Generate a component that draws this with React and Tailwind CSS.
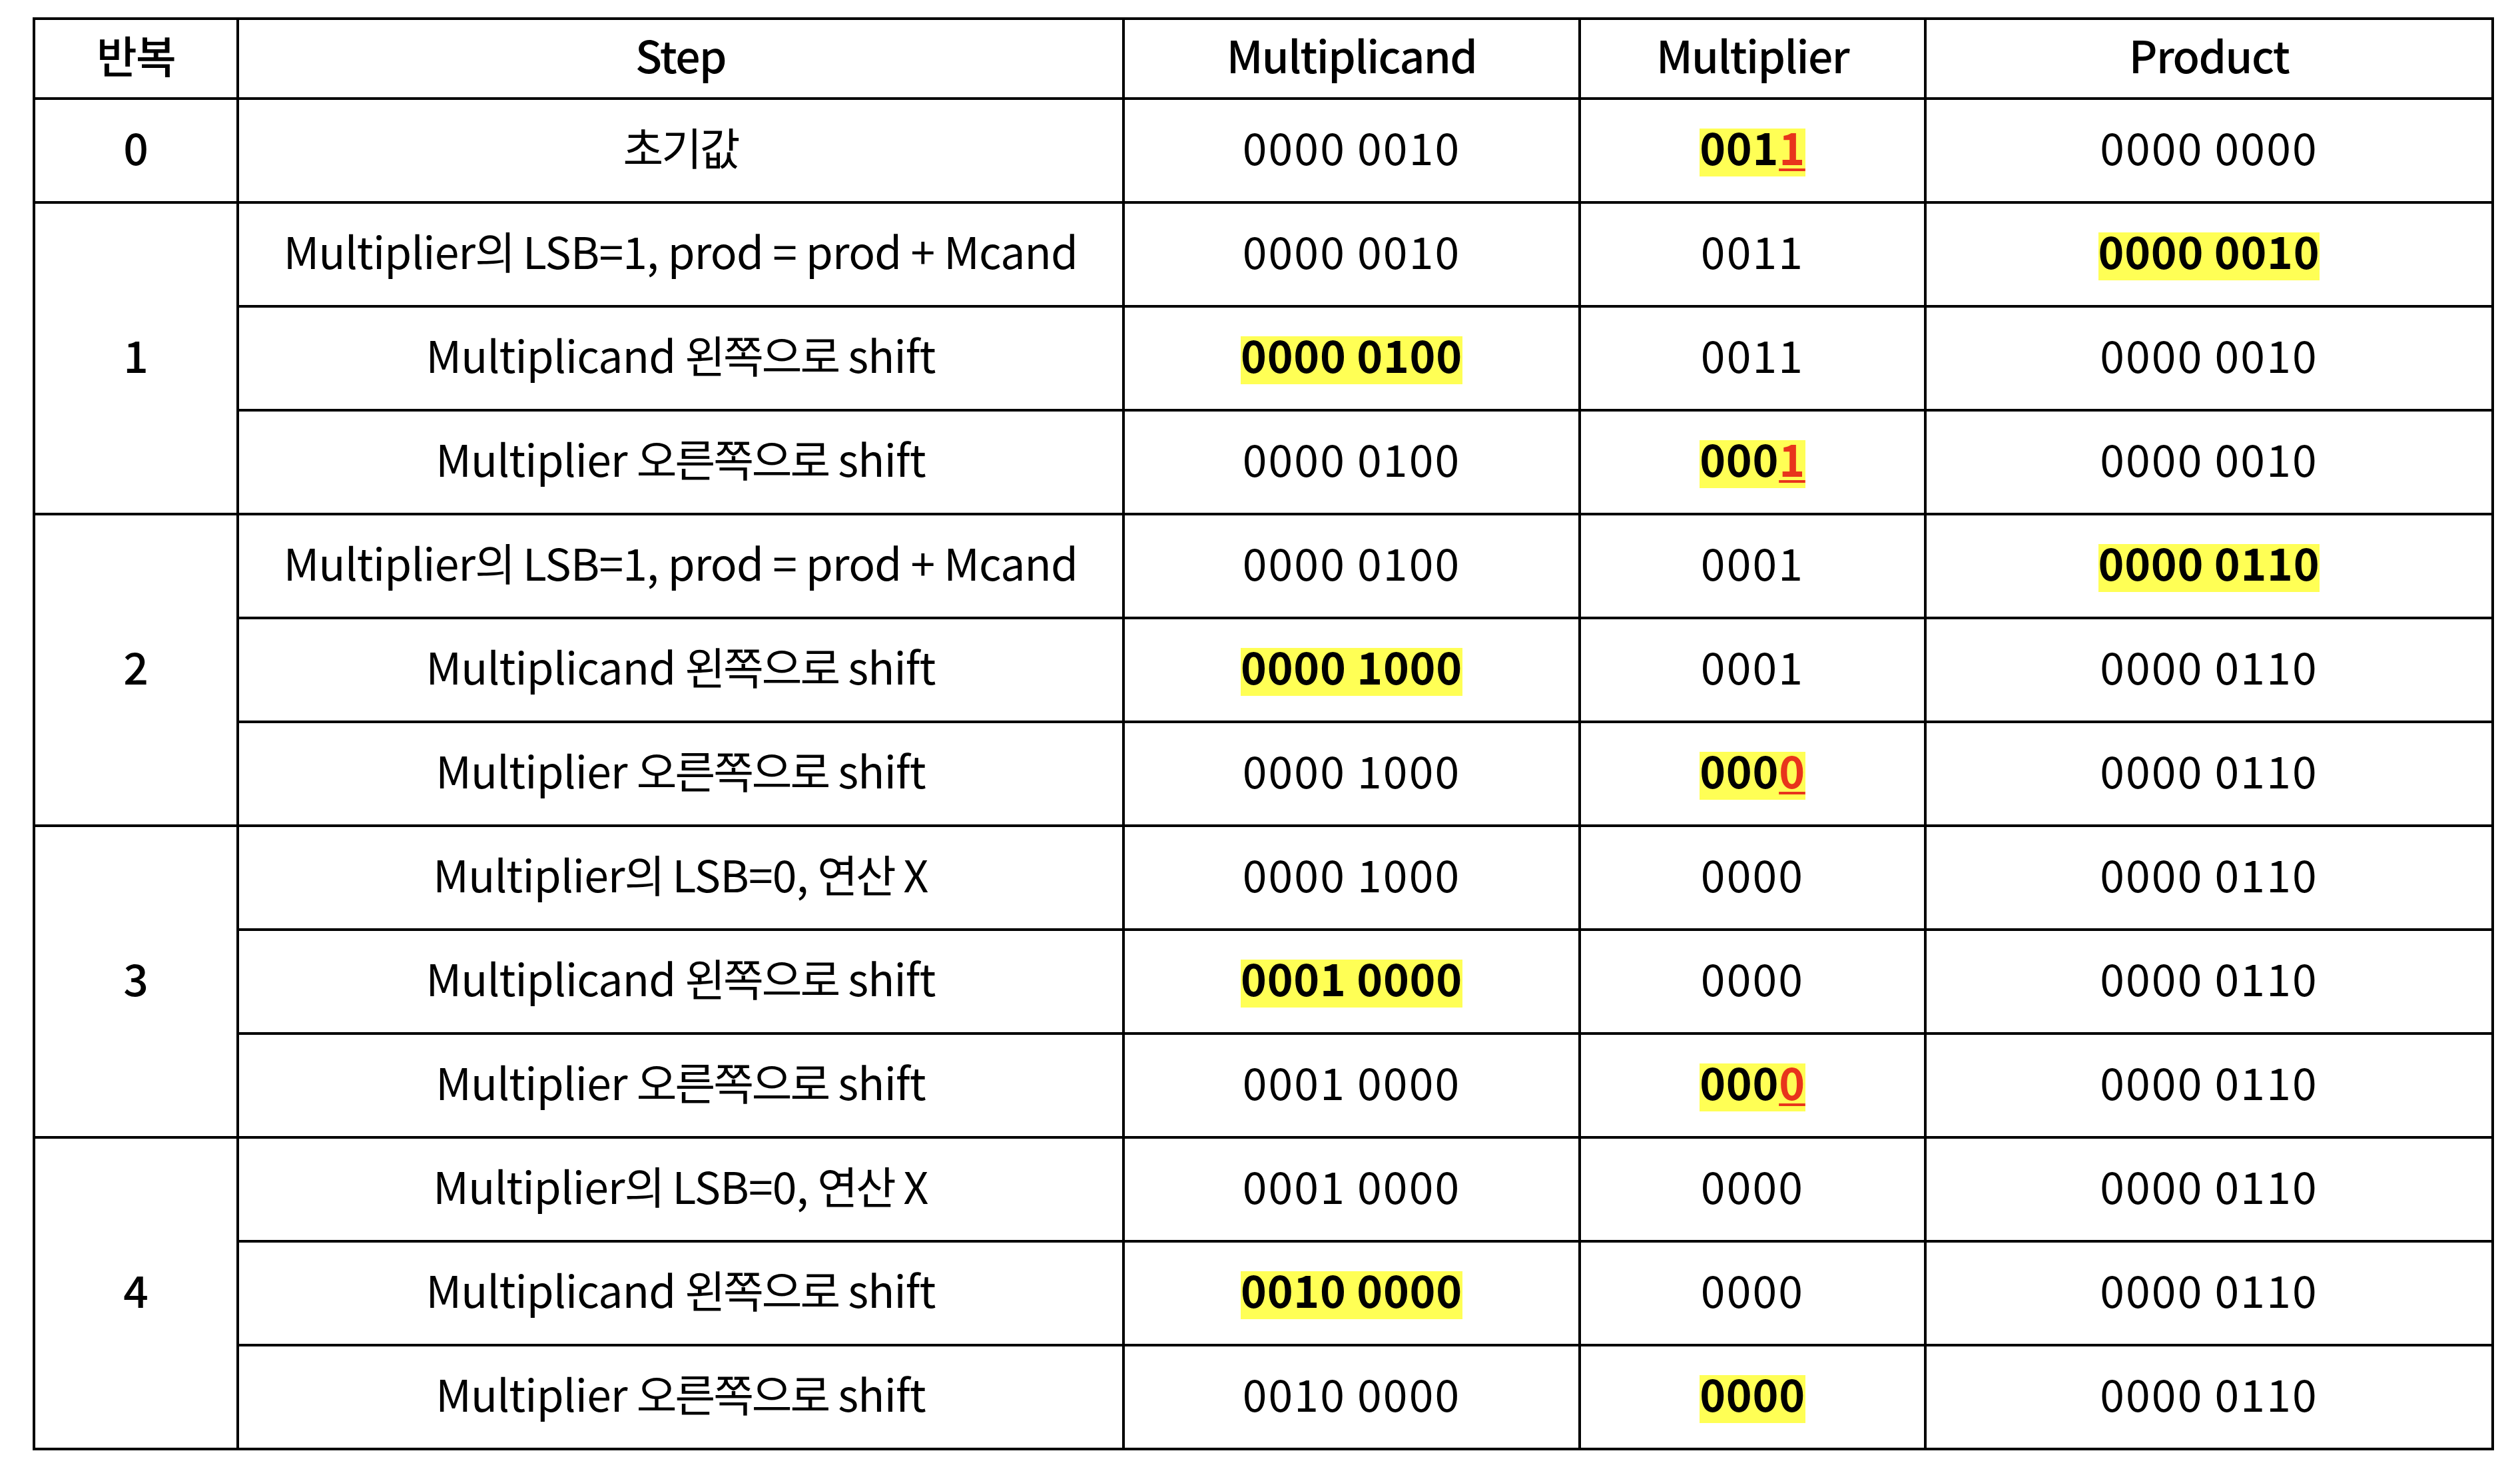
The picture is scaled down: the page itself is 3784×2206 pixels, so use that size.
import React from "react";

const F = "font-['Noto_Sans_CJK_KR','Noto_Sans',sans-serif]";

function Ko({ text }) {
  const parts = text.split(/([\uAC00-\uD7A3]+)/);
  return parts.map((p, i) =>
    /[\uAC00-\uD7A3]/.test(p) ? (
      <span key={i} className="tracking-[-3px]">
        {p}
      </span>
    ) : (
      <React.Fragment key={i}>{p}</React.Fragment>
    )
  );
}

function Box({ children, hl, bold, track = "" }) {
  return (
    <span
      className={
        "inline-block h-[72px] leading-[53px] whitespace-pre " +
        (hl ? "bg-[#ffff55] font-bold tracking-[0.7px] " : track + " ") +
        (bold ? "font-medium " : "")
      }
    >
      {children}
    </span>
  );
}

const isNum = (s) => /^[01 ]+$/.test(s);

function Val({ v }) {
  if (typeof v === "string")
    return isNum(v) ? (
      <Box track="tracking-[2.2px]">{v}</Box>
    ) : (
      <Box track="tracking-[-0.8px]">
        <Ko text={v} />
      </Box>
    );
  const { t, hl, red } = v;
  if (red) {
    return (
      <Box hl={hl}>
        {t.slice(0, -1)}
        <span className="text-[#e8341c] underline decoration-[#e8341c] decoration-[4px] underline-offset-[5px]">
          {t.slice(-1)}
        </span>
      </Box>
    );
  }
  return <Box hl={hl}>{t}</Box>;
}

function Cell({ children, className = "" }) {
  return (
    <div className={"bg-white flex items-center justify-center pt-[6px] " + className}>
      {children}
    </div>
  );
}

const groups = [
  {
    iter: "1",
    rows: [
      ["Multiplier의 LSB=1, prod = prod + Mcand", "0000 0010", "0011", { t: "0000 0010", hl: true }],
      ["Multiplicand 왼쪽으로 shift", { t: "0000 0100", hl: true }, "0011", "0000 0010"],
      ["Multiplier 오른쪽으로 shift", "0000 0100", { t: "0001", hl: true, red: true }, "0000 0010"],
    ],
  },
  {
    iter: "2",
    rows: [
      ["Multiplier의 LSB=1, prod = prod + Mcand", "0000 0100", "0001", { t: "0000 0110", hl: true }],
      ["Multiplicand 왼쪽으로 shift", { t: "0000 1000", hl: true }, "0001", "0000 0110"],
      ["Multiplier 오른쪽으로 shift", "0000 1000", { t: "0000", hl: true, red: true }, "0000 0110"],
    ],
  },
  {
    iter: "3",
    rows: [
      ["Multiplier의 LSB=0, 연산 X", "0000 1000", "0000", "0000 0110"],
      ["Multiplicand 왼쪽으로 shift", { t: "0001 0000", hl: true }, "0000", "0000 0110"],
      ["Multiplier 오른쪽으로 shift", "0001 0000", { t: "0000", hl: true, red: true }, "0000 0110"],
    ],
  },
  {
    iter: "4",
    rows: [
      ["Multiplier의 LSB=0, 연산 X", "0001 0000", "0000", "0000 0110"],
      ["Multiplicand 왼쪽으로 shift", { t: "0010 0000", hl: true }, "0000", "0000 0110"],
      ["Multiplier 오른쪽으로 shift", "0010 0000", { t: "0000", hl: true }, "0000 0110"],
    ],
  },
];

export default function App() {
  const headers = ["반복", "Step", "Multiplicand", "Multiplier", "Product"];
  return (
    <div className={"min-h-[2206px] w-[3784px] bg-white pl-[49px] pt-[26px] text-black text-[66px] " + F}>
      <div className="grid w-fit grid-cols-[302px_1326px_681px_515px_848px] grid-rows-[116px_repeat(13,152px)] gap-[4px] bg-black p-[4px]">
        {headers.map((h) => (
          <div key={h} className="bg-white flex items-center justify-center pt-[6px]">
            <Box bold track="tracking-[-1.6px]">{h}</Box>
          </div>
        ))}
        <Cell>
          <Box bold>0</Box>
        </Cell>
        <Cell>
          <Box track="tracking-[-0.8px]">
            <Ko text="초기값" />
          </Box>
        </Cell>
        <Cell>
          <Val v="0000 0010" />
        </Cell>
        <Cell>
          <Val v={{ t: "0011", hl: true, red: true }} />
        </Cell>
        <Cell>
          <Val v="0000 0000" />
        </Cell>
        {groups.map((g) => (
          <React.Fragment key={g.iter}>
            <Cell className="row-span-3">
              <Box bold>{g.iter}</Box>
            </Cell>
            {g.rows.map((r, i) => (
              <React.Fragment key={i}>
                {r.map((v, j) => (
                  <Cell key={j}>
                    <Val v={v} />
                  </Cell>
                ))}
              </React.Fragment>
            ))}
          </React.Fragment>
        ))}
      </div>
    </div>
  );
}
